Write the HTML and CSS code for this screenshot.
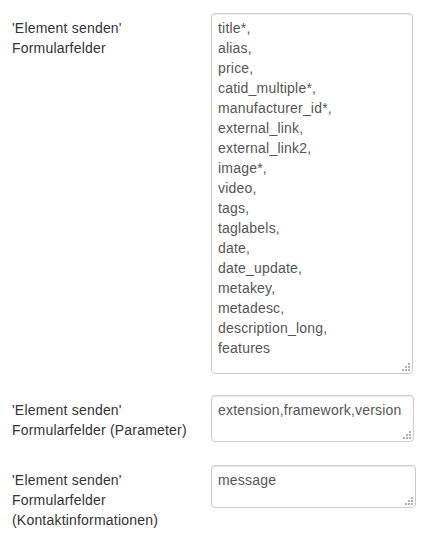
FILE: index.html
```html
<!DOCTYPE html>
<html lang="de">
<head>
<meta charset="utf-8">
<title>Formularfelder</title>
<link rel="stylesheet" href="styles.css">
</head>
<body>
<div class="form">
  <div class="row row-1">
    <label class="lbl" for="f1">'Element senden' Formularfelder</label>
    <div class="field">
      <textarea id="f1" class="ta ta-1">title*,
alias,
price,
catid_multiple*,
manufacturer_id*,
external_link,
external_link2,
image*,
video,
tags,
taglabels,
date,
date_update,
metakey,
metadesc,
description_long,
features</textarea>
      <svg class="grip" width="8" height="8" viewBox="0 0 8 8" aria-hidden="true"><rect x="6" y="0" width="2" height="2"/><rect x="3" y="3" width="2" height="2"/><rect x="6" y="3" width="2" height="2"/><rect x="0" y="6" width="2" height="2"/><rect x="3" y="6" width="2" height="2"/><rect x="6" y="6" width="2" height="2"/></svg>
    </div>
  </div>
  <div class="row row-2">
    <label class="lbl" for="f2">'Element senden' Formularfelder (Parameter)</label>
    <div class="field">
      <textarea id="f2" class="ta ta-2">extension,framework,version</textarea>
      <svg class="grip" width="8" height="8" viewBox="0 0 8 8" aria-hidden="true"><rect x="6" y="0" width="2" height="2"/><rect x="3" y="3" width="2" height="2"/><rect x="6" y="3" width="2" height="2"/><rect x="0" y="6" width="2" height="2"/><rect x="3" y="6" width="2" height="2"/><rect x="6" y="6" width="2" height="2"/></svg>
    </div>
  </div>
  <div class="row row-3">
    <label class="lbl" for="f3">'Element senden' Formularfelder (Kontaktinformationen)</label>
    <div class="field">
      <textarea id="f3" class="ta ta-3">message</textarea>
      <svg class="grip" width="8" height="8" viewBox="0 0 8 8" aria-hidden="true"><rect x="6" y="0" width="2" height="2"/><rect x="3" y="3" width="2" height="2"/><rect x="6" y="3" width="2" height="2"/><rect x="0" y="6" width="2" height="2"/><rect x="3" y="6" width="2" height="2"/><rect x="6" y="6" width="2" height="2"/></svg>
    </div>
  </div>
</div>
</body>
</html>
```
FILE: styles.css
```css
html, body {
  margin: 0;
  padding: 0;
  background: #fff;
}
body {
  font-family: "Liberation Sans", Arial, sans-serif;
  font-size: 14px;
  line-height: 20px;
  letter-spacing: 0.2px;
  color: #333;
}
.form {
  padding: 13px 0 0 12px;
}
.row {
  display: grid;
  grid-template-columns: 199px auto;
  align-items: start;
}
.row-1 { margin-bottom: 21px; }
.row-2 { margin-bottom: 23px; }
.lbl {
  display: block;
  padding: 5px 19px 0 0;
  color: #333;
}
.field {
  position: relative;
  justify-self: start;
}
.ta {
  box-sizing: border-box;
  display: block;
  margin: 0;
  padding: 4px 6px;
  font-family: "Liberation Sans", Arial, sans-serif;
  font-size: 14px;
  line-height: 20px;
  letter-spacing: 0.2px;
  color: #555;
  background: #fff;
  border: 1px solid #ccc;
  border-radius: 4px;
  box-shadow: inset 0 1px 1px rgba(0, 0, 0, 0.075);
  overflow: hidden;
  resize: none;
}
.ta-1 { width: 202px; height: 361px; }
.ta-2 { width: 203px; height: 47px; }
.ta-3 { width: 205px; height: 43px; }
.grip {
  position: absolute;
  right: 3px;
  bottom: 3px;
  fill: #b0b0b0;
}
```
